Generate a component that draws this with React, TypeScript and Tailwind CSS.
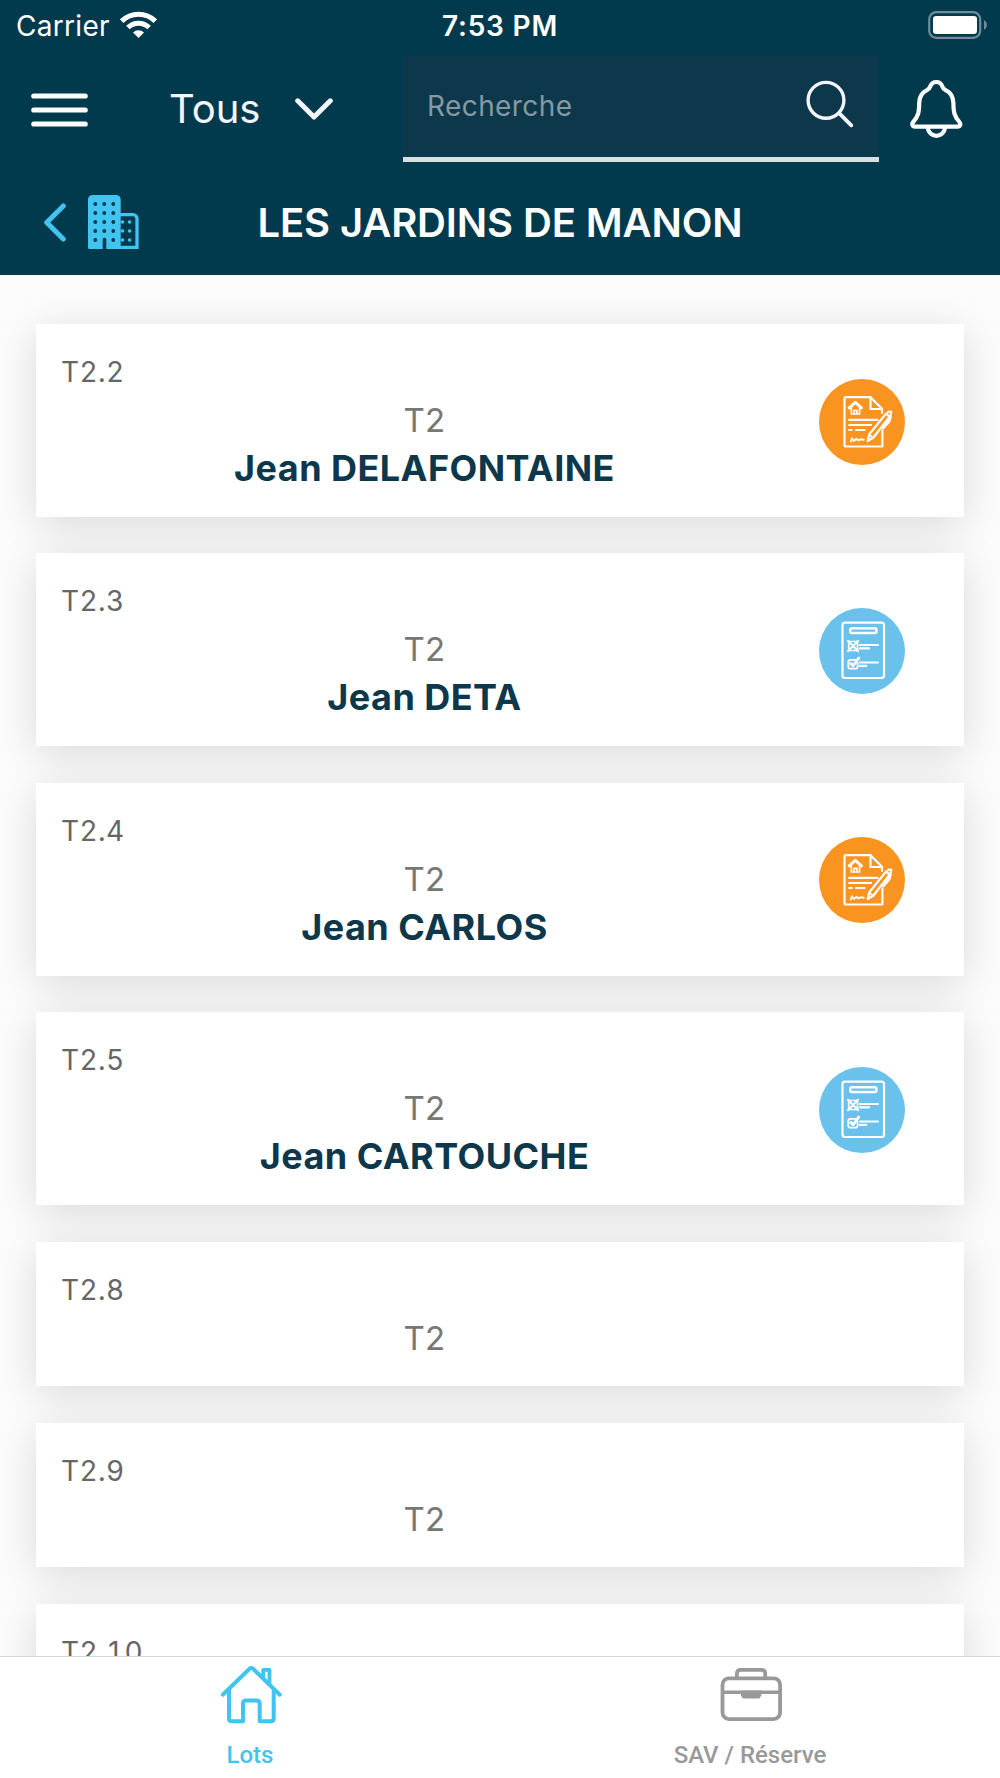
type LotStatus = 'contract' | 'checklist';

interface Lot {
  ref: string;
  type: string;
  owner?: string;
  status?: LotStatus;
}

const lots: Lot[] = [
  { ref: 'T2.2', type: 'T2', owner: 'Jean DELAFONTAINE', status: 'contract' },
  { ref: 'T2.3', type: 'T2', owner: 'Jean DETA', status: 'checklist' },
  { ref: 'T2.4', type: 'T2', owner: 'Jean CARLOS', status: 'contract' },
  { ref: 'T2.5', type: 'T2', owner: 'Jean CARTOUCHE', status: 'checklist' },
  { ref: 'T2.8', type: 'T2' },
  { ref: 'T2.9', type: 'T2' },
  { ref: 'T2.10', type: 'T2' },
];

function WifiIcon() {
  return (
    <svg width="37" height="27" viewBox="0 0 37 27" fill="none" stroke="#fff">
      <path d="M1.7 10.2a23.8 23.8 0 0 1 33.6 0" strokeWidth="5.2" />
      <path d="M7.9 16.6a15 15 0 0 1 21.2 0" strokeWidth="5" />
      <path d="M13 21.6a7.8 7.8 0 0 1 11 0L18.5 27Z" fill="#fff" stroke="none" />
    </svg>
  );
}

function BatteryIcon() {
  return (
    <svg width="60" height="28" viewBox="0 0 60 28">
      <rect x="1.2" y="1.2" width="51" height="25.6" rx="7" fill="none" stroke="#6f8c98" strokeWidth="2.2" />
      <rect x="5" y="5" width="44" height="18" rx="3.2" fill="#fff" />
      <path d="M56 9.2c3.8 1.8 3.8 7.8 0 9.6Z" fill="#6f8c98" />
    </svg>
  );
}

function MenuIcon() {
  return (
    <svg width="57" height="34" viewBox="0 0 57 34" stroke="#fff" strokeWidth="5.2" strokeLinecap="round">
      <path d="M2.8 3H54.2M2.8 17H54.2M2.8 31H54.2" />
    </svg>
  );
}

function ChevronDownIcon() {
  return (
    <svg width="38" height="22" viewBox="0 0 38 22" fill="none" stroke="#f4f4fb" strokeWidth="5" strokeLinecap="round" strokeLinejoin="round">
      <path d="M2.7 2.8 19 19 35.3 2.8" />
    </svg>
  );
}

function SearchIcon() {
  return (
    <svg width="48" height="48" viewBox="0 0 48 48" fill="none" stroke="#f4f4fb" strokeLinecap="round">
      <circle cx="20" cy="20.3" r="17.9" strokeWidth="3.4" />
      <path d="M33.3 33.3 45.3 45.3" strokeWidth="3.8" />
    </svg>
  );
}

function BellIcon() {
  return (
    <svg width="53" height="61" viewBox="0 0 53 61" fill="none" stroke="#fff" strokeWidth="4.2" strokeLinejoin="round">
      <path d="M26.3 3c-3 0-5 1.5-6 4.3-.6 1.8-1.6 3-3.3 3.8C11.5 13.7 9.3 18.5 9.2 24 9.1 33 8.5 37 3.2 43 1.5 45 2.3 47.7 5 47.7H47.6C50.3 47.7 51.1 45 49.4 43 44.1 37 43.5 33 43.4 24 43.3 18.5 41.1 13.7 35.6 11.1c-1.7-.8-2.7-2-3.3-3.8-1-2.8-3-4.3-6-4.3Z" />
      <path d="M17.6 48.5a8.9 9.8 0 0 0 17.6 0" />
    </svg>
  );
}

function BackIcon() {
  return (
    <svg width="22" height="39" viewBox="0 0 22 39" fill="none" stroke="#41c4ef" strokeWidth="5" strokeLinecap="round" strokeLinejoin="round">
      <path d="M19.3 3 2.8 19.5 19.3 36" />
    </svg>
  );
}

function BuildingIcon() {
  const rows = [9, 18, 27, 36, 45];
  return (
    <svg width="51" height="54" viewBox="0 0 51 54" fill="#41c4ef">
      <path d="M4.5 0H28.2A4.5 4.5 0 0 1 32.7 4.5V54H18.3V44.5a1.8 1.8 0 0 0-3.6 0V54H1.5A1.5 1.5 0 0 1 0 52.5V4.5A4.5 4.5 0 0 1 4.5 0Z" />
      <path d="M31 19.7H45A4 4 0 0 1 49 23.7V52.3H31" fill="none" stroke="#41c4ef" strokeWidth="3.3" />
      {rows.map((y) => (
        <g key={y} fill="#023a4d">
          <circle cx="7.3" cy={y} r="1.9" />
          {y < 45 && <circle cx="16.3" cy={y} r="1.9" />}
          <circle cx="25.3" cy={y} r="1.9" />
        </g>
      ))}
      {rows.slice(2).map((y) => (
        <g key={y}>
          <circle cx="34.5" cy={y} r="1.8" />
          <circle cx="41.6" cy={y} r="1.8" />
        </g>
      ))}
    </svg>
  );
}

function ContractIcon() {
  return (
    <svg width="86" height="86" viewBox="0 0 86 86" fill="none" stroke="#fff" strokeWidth="2.2" strokeLinecap="round" strokeLinejoin="round">
      <circle cx="43" cy="43" r="43" fill="#f99420" stroke="none" />
      <path d="M63 34V29.7L51.5 18.2H27A1.5 1.5 0 0 0 25.5 19.7V66A1.5 1.5 0 0 0 27 67.5H63.4V51.5" />
      <path d="M51.5 18.2V30H62.8" />
      <path d="M30.2 28.8 36.3 23.3 42.5 28.8" strokeWidth="3" />
      <path d="M32.3 28.5V35H40.6V28.5M35 35V31.3H38V35" strokeWidth="1.7" />
      <path d="M30.2 40.8H58.5M30.2 46H52M30.2 51H32.8M37 51H45.5" />
      <path d="M31.8 62.5 33 59.2 34.8 62 37.5 59.7 39 61.5 41.5 60.3 44.8 60.7" strokeWidth="1.9" />
      <path d="M48.7 62 50.3 55.3 67 34.6 70.6 37.6 54.5 58.5Z" fill="#f99420" />
      <path d="M50.5 56 54 58.7M67.7 35 69.7 32.4 72.3 32.8 72 35.5 70.2 37.4" strokeWidth="2" />
      <path d="M71.3 38 70 42.2 64 49" strokeWidth="3" />
    </svg>
  );
}

function ChecklistIcon() {
  return (
    <svg width="86" height="86" viewBox="0 0 86 86" fill="none" stroke="#fff" strokeWidth="2.2" strokeLinecap="round" strokeLinejoin="round">
      <circle cx="43" cy="43" r="43" fill="#69c1ec" stroke="none" />
      <rect x="23.5" y="14.7" width="41.5" height="55.3" rx="2.5" />
      <rect x="31.2" y="20.2" width="26.3" height="4.8" rx="1.8" strokeWidth="2.4" />
      <rect x="29.7" y="33.5" width="8.8" height="9" strokeWidth="1.7" />
      <path d="M29 32.8 39.2 43.2M39.2 32.8 29 43.2" strokeWidth="2" />
      <path d="M40.8 37H59M40.8 40.3H50" />
      <path d="M36.5 51.8H31.5A2.2 2.2 0 0 0 29.3 54V58.4A2.2 2.2 0 0 0 31.5 60.6H36.4A2.2 2.2 0 0 0 38.6 58.4V55" strokeWidth="1.8" />
      <path d="M31.8 55.5 34 57.8 39.8 50" strokeWidth="2.8" />
      <path d="M41 54.5H59M41 57.9H47.2" />
    </svg>
  );
}

function HomeIcon() {
  return (
    <svg width="62" height="59" viewBox="0 0 62 59" fill="none" stroke="#41c4ef" strokeWidth="4" strokeLinecap="round" strokeLinejoin="round">
      <path d="M2.8 29.7 29.6 3.8Q31.3 2.2 33 3.8L59.8 29.7" />
      <path d="M9 25.5V53.5Q9 56.2 11.7 56.2H23V39Q23 35.6 26.3 35.6H36.4Q39.7 35.6 39.7 39V56.2H51Q53.7 56.2 53.7 53.5V25.5" />
      <path d="M43.2 12V4.8H49.5V19" strokeWidth="3.8" />
    </svg>
  );
}

function BriefcaseIcon() {
  return (
    <svg width="63" height="56" viewBox="0 0 63 56" fill="none" stroke="#999" strokeWidth="3.8">
      <rect x="2.5" y="11.3" width="57.6" height="40.8" rx="6.5" />
      <path d="M16.9 11V6.5Q16.9 2.9 20.5 2.9H41.6Q45.2 2.9 45.2 6.5V11" />
      <path d="M2.5 25.3H60" strokeWidth="3.6" />
      <path d="M21 23.5H41.3V28.5L39.5 31.6H22.8L21 28.5Z" fill="#999" stroke="none" />
    </svg>
  );
}

function StatusBar() {
  return (
    <div className="grid h-14 grid-cols-[1fr_200px_1fr] items-center pb-[7px] text-white">
      <div className="flex items-center gap-[10px] pl-4">
        <span className="pt-0.5 text-[28px] leading-none tracking-[0.3px]">Carrier</span>
        <WifiIcon />
      </div>
      <div className="pt-0.5 text-center text-[28px] font-semibold leading-none tracking-[0.8px]">7:53 PM</div>
      <div className="flex justify-end pr-3">
        <BatteryIcon />
      </div>
    </div>
  );
}

function Toolbar() {
  return (
    <div className="flex h-[106px] items-center pl-[31px]">
      <div className="pt-0.5">
        <MenuIcon />
      </div>
      <div className="ml-[81px] flex w-[234px] items-center">
        <span className="w-[126px] text-[40px] leading-none text-[#f4f4fb]">Tous</span>
        <ChevronDownIcon />
      </div>
      <div className="flex h-full w-[476px] items-center justify-between border-b-[5px] border-[#d6dfe2] bg-[#0d384c] pb-[5px] pl-6 pr-[25px]">
        <span className="pt-1 text-[28px] leading-none tracking-[0.4px] text-[#8399a3]">Recherche</span>
        <SearchIcon />
      </div>
      <div className="ml-[31px]">
        <BellIcon />
      </div>
    </div>
  );
}

function TitleBar() {
  return (
    <div className="grid h-[113px] grid-cols-[240px_1fr_240px] items-center pt-2">
      <div className="flex items-center gap-[22px] pb-px pl-[44px]">
        <BackIcon />
        <BuildingIcon />
      </div>
      <h1 className="whitespace-nowrap text-center text-[40px] font-semibold leading-none tracking-[-0.13px] text-white">LES JARDINS DE MANON</h1>
    </div>
  );
}

function LotCard({ lot }: { lot: Lot }) {
  return (
    <div
      className={`flex shrink-0 items-center justify-between bg-white pr-[59px] shadow-[0_8px_40px_rgba(0,0,0,0.14)] ${
        lot.owner ? 'h-[193.1px]' : 'h-[144.8px]'
      }`}
    >
      <div className="h-full w-[777px] pt-[28px] text-center">
        <div className="pl-[25px] text-left text-[28px] leading-[40px] tracking-[0.4px] tabular-nums text-[#666]">{lot.ref}</div>
        <div className="text-[33px] leading-[57px] tracking-[0.3px] text-[#777]">{lot.type}</div>
        {lot.owner && <div className="text-[36px] font-bold leading-[38px] tracking-[0.45px] text-[#0d384c]">{lot.owner}</div>}
      </div>
      <div className="pt-0.5">
        {lot.status === 'contract' && <ContractIcon />}
        {lot.status === 'checklist' && <ChecklistIcon />}
      </div>
    </div>
  );
}

function TabBar() {
  return (
    <nav className="z-10 grid h-[122px] shrink-0 grid-cols-2 border-t border-[#d5d8d8] bg-white font-[Roboto,sans-serif] text-[24px] font-medium leading-none">
      <a href="#" className="flex flex-col items-center pt-2 text-[#41c4ef]">
        <div className="pl-0.5">
          <HomeIcon />
        </div>
        <span className="mt-[19px]">Lots</span>
      </a>
      <a href="#" className="flex flex-col items-center pt-[10px] text-[#999]">
        <div className="pl-0.5">
          <BriefcaseIcon />
        </div>
        <span className="mt-5">SAV / Réserve</span>
      </a>
    </nav>
  );
}

export default function App() {
  return (
    <div className="flex h-[1778px] w-[1000px] flex-col overflow-hidden bg-[#fcfcfc] font-[Inter,sans-serif]">
      <header className="z-10 h-[275px] shrink-0 bg-[#023a4d]">
        <StatusBar />
        <Toolbar />
        <TitleBar />
      </header>
      <main className="flex min-h-0 flex-1 flex-col gap-[36.3px] overflow-hidden px-9 pt-[49px]">
        {lots.map((lot) => (
          <LotCard key={lot.ref} lot={lot} />
        ))}
      </main>
      <TabBar />
    </div>
  );
}
